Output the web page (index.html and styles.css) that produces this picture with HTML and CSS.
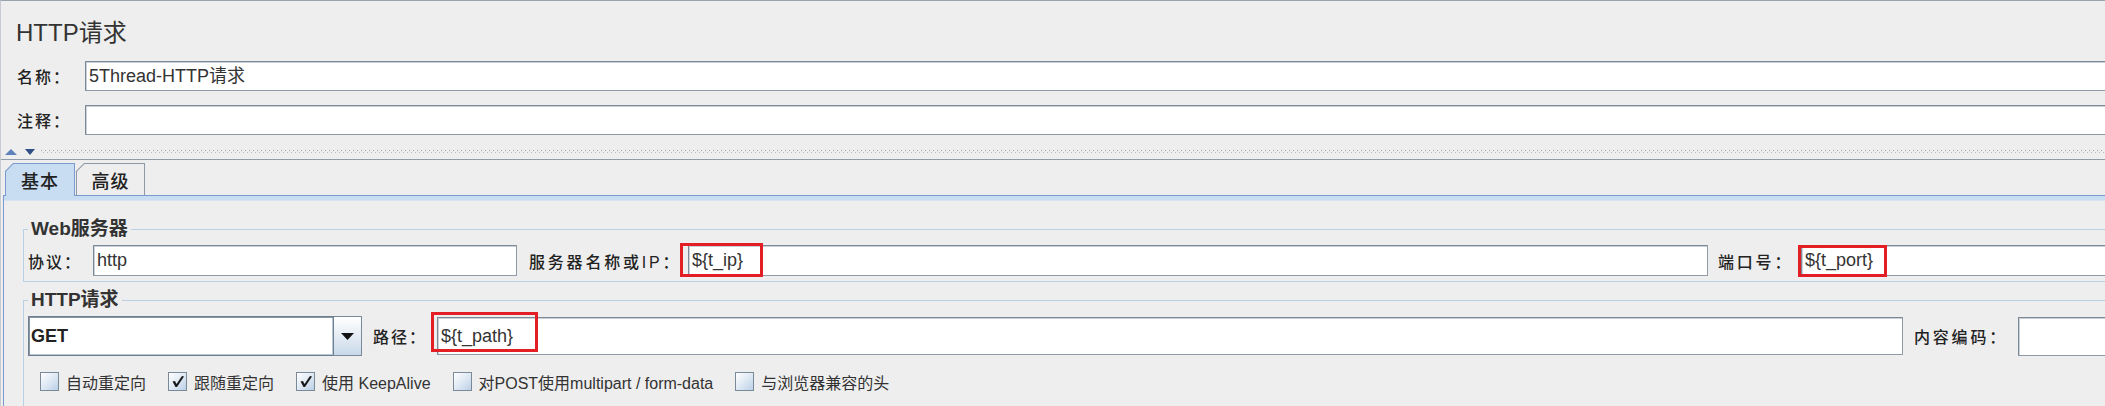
FILE: index.html
```html
<!DOCTYPE html>
<html lang="zh-CN">
<head>
<meta charset="utf-8">
<title>HTTP请求</title>
<link rel="stylesheet" href="styles.css">
</head>
<body>
<div class="frame">
 <div class="canvas">
  <div class="title">HTTP请求</div>
  <div class="meta-row">
    <span class="lbl">名称：</span>
    <div class="field">5Thread-HTTP请求</div>
  </div>
  <div class="meta-row">
    <span class="lbl">注释：</span>
    <div class="field"></div>
  </div>
  <div class="splitter">
    <svg class="arrows" width="34" height="8" viewBox="0 0 34 8">
      <polygon points="0,7 6,1 12,7" fill="#5f82bb"/>
      <polygon points="20,1 30,1 25,7" fill="#2f4f86"/>
    </svg>
    <svg class="dots" height="5">
      <defs>
        <pattern id="dp" width="4" height="4" patternUnits="userSpaceOnUse">
          <rect x="0" y="0" width="1" height="1" fill="#9ea9b4"/>
          <rect x="2" y="2" width="1" height="1" fill="#b4bcc4"/>
        </pattern>
      </defs>
      <rect width="100%" height="4" fill="url(#dp)"/>
    </svg>
  </div>
  <div class="tabs">
    <div class="tab active"><div class="tab-face">基本</div></div>
    <div class="tab"><div class="tab-face">高级</div></div>
  </div>
  <div class="panel">
    <div class="strip"></div>
    <fieldset class="group group-web">
      <legend>Web服务器</legend>
      <div class="group-row">
        <span class="lbl lbl-proto">协议：</span>
        <div class="field f-proto">http</div>
        <span class="lbl lbl-host">服务器名称或IP：</span>
        <div class="field f-host">${t_ip}<span class="anno anno-ip"></span></div>
        <span class="lbl lbl-port">端口号：</span>
        <div class="field f-port">${t_port}<span class="anno anno-port"></span></div>
      </div>
    </fieldset>
    <fieldset class="group group-http">
      <legend>HTTP请求</legend>
      <div class="group-row">
        <div class="combo">
          <div class="combo-field">GET</div>
          <div class="combo-btn">
            <svg width="13" height="7" viewBox="0 0 13 7"><polygon points="0,0 13,0 6.5,7" fill="#111"/></svg>
          </div>
        </div>
        <span class="lbl lbl-path">路径：</span>
        <div class="field f-path">${t_path}<span class="anno anno-path"></span></div>
        <span class="lbl lbl-enc">内容编码：</span>
        <div class="field f-enc"></div>
      </div>
      <div class="checks">
        <label class="check"><span class="box"></span><span class="ctext">自动重定向</span></label>
        <label class="check"><span class="box checked"><svg width="17" height="17" viewBox="0 0 17 17"><path d="M3.5 8.5 L6 8 L7.5 11 L13 3 L15 3.5 L8 14 L6.5 14 Z" fill="#1a1a1a"/></svg></span><span class="ctext">跟随重定向</span></label>
        <label class="check"><span class="box checked"><svg width="17" height="17" viewBox="0 0 17 17"><path d="M3.5 8.5 L6 8 L7.5 11 L13 3 L15 3.5 L8 14 L6.5 14 Z" fill="#1a1a1a"/></svg></span><span class="ctext">使用 KeepAlive</span></label>
        <label class="check"><span class="box"></span><span class="ctext">对POST使用multipart / form-data</span></label>
        <label class="check"><span class="box"></span><span class="ctext">与浏览器兼容的头</span></label>
      </div>
    </fieldset>
  </div>
 </div>
</div>
</body>
</html>
```

FILE: styles.css
```css
* { box-sizing: border-box; }

html, body {
  margin: 0;
  padding: 0;
  width: 2105px;
  height: 406px;
  overflow: hidden;
  background: #eeeeee;
}

body {
  font-family: "Liberation Sans", "Noto Sans CJK SC", sans-serif;
  color: #333333;
}

.frame {
  width: 2105px;
  height: 406px;
  overflow: hidden;
  border-top: 1px solid #98a4b0;
  border-left: 1px solid #c6ccd2;
}

.canvas {
  width: 2230px;
}

.title {
  margin: 17px 0 0 15px;
  font-size: 24px;
  line-height: 30px;
  height: 30px;
  color: #333;
}

.lbl {
  flex: none;
  font-size: 16px;
  font-weight: 500;
  letter-spacing: 2px;
  white-space: nowrap;
  color: #222;
}

.field {
  position: relative;
  height: 30px;
  background: #ffffff;
  border: 1px solid #8e9aa6;
  border-top-color: #7d8995;
  border-left-color: #7d8995;
  box-shadow: inset 1px 1px 0 #c9d0d7;
  padding-left: 3px;
  font-size: 18px;
  line-height: 28px;
  color: #333;
  white-space: nowrap;
}

.meta-row {
  display: flex;
  align-items: center;
  margin-top: 13px;
  padding-left: 16px;
}

.meta-row + .meta-row { margin-top: 14px; }

.meta-row .lbl { width: 68px; }
.meta-row .field { flex: 1; }

.splitter {
  display: flex;
  align-items: center;
  height: 15px;
  margin-top: 10px;
  padding-left: 4px;
  border-bottom: 1px solid #8f9ba6;
}

.arrows { flex: none; margin-right: 2px; }
.dots { flex: 1; }

.tabs {
  display: flex;
  height: 33px;
  margin-top: 3px;
  padding-left: 4px;
  position: relative;
  z-index: 1;
  margin-bottom: -1px;
}

.tab {
  width: 69px;
  height: 32px;
  padding: 1px 1px 0 1px;
  margin-left: 1px;
  background: #8e9aa6;
  clip-path: polygon(0 8px, 8px 0, 100% 0, 100% 100%, 0 100%);
}

.tab.active {
  width: 70px;
  height: 33px;
  margin-left: 0;
  background: #7b9ad0;
}

.tab-face {
  height: 100%;
  display: flex;
  align-items: center;
  justify-content: center;
  font-size: 18px;
  font-weight: 500;
  letter-spacing: 1px;
  color: #222;
  background: #eeeeee;
  clip-path: polygon(0 7.5px, 7.5px 0, 100% 0, 100% 100%, 0 100%);
}

.tab.active .tab-face {
  background: #c8ddf2;
  padding-bottom: 1px;
}

.panel {
  margin-left: 2px;
  height: 220px;
  border-top: 1px solid #7b9ad0;
  border-left: 1px solid #7b9ad0;
}

.strip {
  height: 5px;
  background: #c8ddf2;
  border-bottom: 1px solid #d7e4f1;
}

.group {
  margin: 17px 0 0 19px;
  padding: 5px 0 5px 4px;
  border: 1px solid #b8cfe5;
  min-width: 0;
}

.group legend {
  padding: 0 3px;
  font-size: 19px;
  line-height: 22px;
  font-weight: bold;
  color: #333;
}

.group-http {
  margin-top: 7px;
  padding-bottom: 40px;
}

.group-row {
  display: flex;
  align-items: center;
}

.group-web .field { height: 31px; line-height: 29px; }

.lbl-proto { width: 65px; }
.f-proto { width: 424px; }
.lbl-host { width: 159px; margin-left: 12px; letter-spacing: 2.8px; }
.f-host { width: 1020px; }
.lbl-port { width: 83px; margin-left: 10px; letter-spacing: 2.8px; }
.f-port { flex: 1; }

.combo {
  flex: none;
  display: flex;
  width: 334px;
  height: 40px;
}

.combo-field {
  flex: 1;
  background: #fff;
  border: 1px solid #6f7f8f;
  box-shadow: inset 1px 1px 0 #8796a5, inset -1px -1px 0 #b8c7d6;
  padding-left: 2px;
  font-size: 18px;
  font-weight: bold;
  line-height: 38px;
  color: #222;
}

.combo-btn {
  width: 28px;
  display: flex;
  align-items: center;
  justify-content: center;
  border: 1px solid #7a8a99;
  border-left: none;
  background: linear-gradient(#ffffff, #c9d9ea);
}

.lbl-path { width: 64px; margin-left: 11px; }
.f-path { width: 1466px; height: 38px; line-height: 36px; }
.lbl-enc { width: 104px; margin-left: 11px; letter-spacing: 2.8px; }
.f-enc { flex: 1; height: 39px; }

.anno {
  position: absolute;
  border: 3px solid #e31e24;
}

.anno-ip { left: -9px; top: -3px; width: 83px; height: 34px; }
.anno-port { left: -4px; top: -1px; width: 89px; height: 32px; }
.anno-path { left: -7px; top: -6px; width: 107px; height: 40px; }

.checks {
  display: flex;
  align-items: center;
  gap: 22px;
  margin-top: 16px;
  padding-left: 12px;
  height: 19px;
}

.check {
  display: flex;
  align-items: center;
  gap: 7px;
  font-size: 16px;
  color: #333;
  white-space: nowrap;
}

.box {
  width: 19px;
  height: 19px;
  flex: none;
  border: 1px solid #7a8a99;
  background: linear-gradient(135deg, #ffffff 0%, #dfe9f4 50%, #bcd0e6 100%);
  display: flex;
  align-items: center;
  justify-content: center;
}
```
